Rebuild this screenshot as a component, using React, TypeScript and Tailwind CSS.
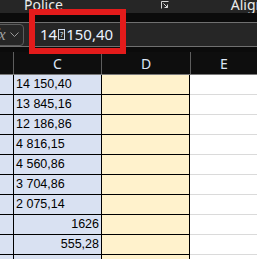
const rows: { v: string; right?: boolean }[] = [
  { v: "14 150,40" },
  { v: "13 845,16" },
  { v: "12 186,86" },
  { v: "4 816,15" },
  { v: "4 560,86" },
  { v: "3 704,86" },
  { v: "2 075,14" },
  { v: "1626", right: true },
  { v: "555,28", right: true },
  { v: "" },
]

const LauncherIcon = () => (
  <svg width="8" height="8" viewBox="0 0 8 8" fill="none" stroke="#d6d6d6" strokeWidth="1">
    <path d="M0.5 7.5V0.5H7.5" />
    <path d="M2.5 2.5L6.5 6.5M3.5 6.5H6.5V3.5" />
  </svg>
)

export default function App() {
  return (
    <div className="relative w-[257px] h-[259px] overflow-hidden bg-[#0b0b0b] font-['Noto_Sans',sans-serif]">
      {/* ribbon group labels */}
      <div className="relative h-[13px] bg-[#262626] overflow-hidden flex items-end">
        <span className="ml-[24px] text-[14px] leading-none text-[#ececec] mb-[1px]">Police</span>
        <div className="ml-[98px] mb-[4px]"><LauncherIcon /></div>
        <div className="ml-[4px] w-px h-full bg-[#4a4a4a]" />
        <span className="ml-[58px] text-[14px] leading-none text-[#ececec] mb-[1px] whitespace-nowrap">Align</span>
      </div>
      <div className="h-[9px] bg-[#0b0b0b]" />

      {/* formula bar */}
      <div className="h-[25px] bg-[#262626] border-y border-[#707070] flex items-center">
        <div className="-ml-[8px] w-[32px] h-[22px] shrink-0 rounded-[4px] border border-[#5c5c5c] flex items-center gap-[4px] pl-[1px]">
          <span className="font-['Liberation_Serif',serif] italic text-[16px] leading-none text-[#a0a0a0]">fx</span>
          <svg width="9" height="6" viewBox="0 0 9 6" fill="none" stroke="#9a9a9a" strokeWidth="1">
            <path d="M0.5 0.5L4.5 4.5L8.5 0.5" />
          </svg>
        </div>
        <div className="ml-[16px] flex items-center text-[15px] leading-none text-[#eaf2ff]">
          <span>14</span>
          <span className="mx-[1px] w-[7px] h-[11px] border border-[#c8d4e6] text-[7px] leading-[9px] text-center">?</span>
          <span>150,40</span>
        </div>
      </div>

      <div className="h-[5px] bg-[#0b0b0b]" />

      {/* column headers */}
      <div className="grid grid-cols-[13px_88px_89px_67px] h-[23px] bg-[#0e0e0e] border-b border-[#7a7a7a] text-[14px] text-[#dde6f5]">
        <div />
        <div className="border-l border-[#5e5e5e] flex items-center justify-center">C</div>
        <div className="border-l border-[#5e5e5e] flex items-center justify-center">D</div>
        <div className="border-l border-[#5e5e5e] flex items-center justify-center">E</div>
      </div>

      {/* grid */}
      <div className="font-['Liberation_Sans',sans-serif] text-[12.5px] text-black">
        {rows.map((r, i) => (
          <div key={i} className="grid grid-cols-[13px_88px_89px_67px] h-[20px]">
            <div className="bg-[#d9e1f2] border-b border-black" />
            <div
              className={`bg-[#d9e1f2] border-l border-b border-black flex items-center px-[2px] ${
                r.right ? "justify-end" : ""
              }`}
            >
              {r.v}
            </div>
            <div className="bg-[#fff2cc] border-l border-r border-b border-black" />
            <div className="bg-white border-b border-[#dadada]" />
          </div>
        ))}
      </div>

      {/* red highlight */}
      <div className="absolute left-[29px] top-[9px] w-[97px] h-[45px] border-[6px] border-[#e31b1b]" />
    </div>
  )
}
